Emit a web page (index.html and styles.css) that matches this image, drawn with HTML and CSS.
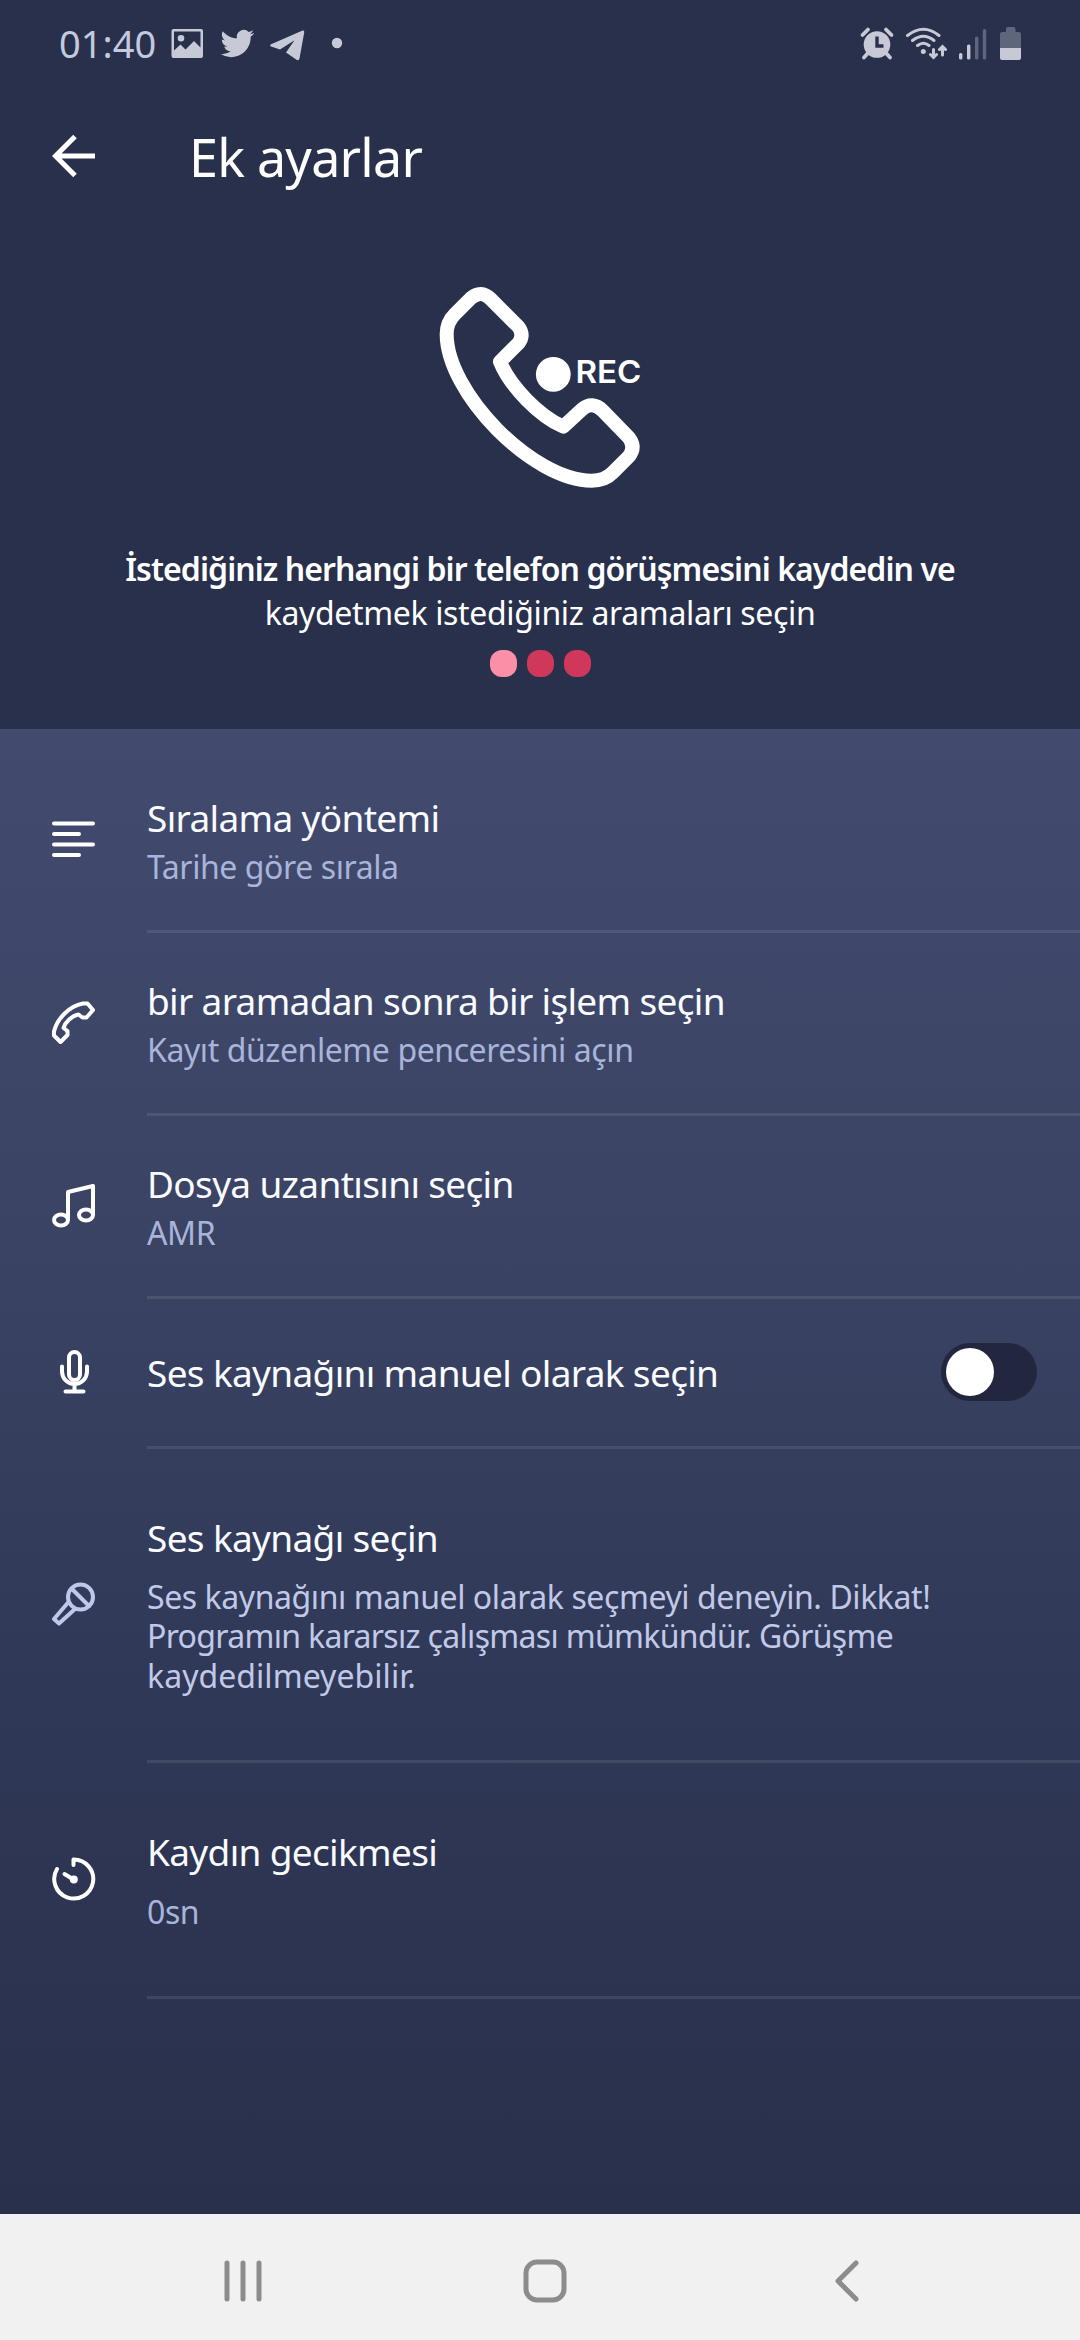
FILE: index.html
```html
<!DOCTYPE html>
<html lang="tr">
<head>
<meta charset="utf-8">
<title>Ek ayarlar</title>
<link rel="stylesheet" href="styles.css">
</head>
<body>
<div class="screen">
  <header class="status">
    <div class="status-left">
      <span class="clock">01:40</span>
      <svg class="status-notifications" width="180" height="40" viewBox="165 22 180 40" fill="currentColor">
        <path fill-rule="evenodd" d="M173.500 28h27.500a2 2 0 0 1 2 2v25a2 2 0 0 1-2 2h-27.500a2 2 0 0 1-2-2v-25a2 2 0 0 1 2-2zM174 30.500v19l6.500-6 5 5 8.500-8.500 6.500 6.500v-16zM181 34a3.300 3.300 0 1 1 0 6.600a3.300 3.300 0 1 1 0-6.600z"/>
        <path transform="translate(220.500 25.700) scale(1.4)" d="M23.953 4.570a10 10 0 0 1-2.825.775 4.958 4.958 0 0 0 2.163-2.723c-.951.555-2.005.959-3.127 1.184a4.920 4.920 0 0 0-8.384 4.482C7.690 8.095 4.067 6.130 1.640 3.162a4.822 4.822 0 0 0-.666 2.475c0 1.710.870 3.213 2.188 4.096a4.904 4.904 0 0 1-2.228-.616v.060a4.923 4.923 0 0 0 3.946 4.827 4.996 4.996 0 0 1-2.212.085 4.936 4.936 0 0 0 4.604 3.417 9.867 9.867 0 0 1-6.102 2.105c-.390 0-.779-.023-1.170-.067a13.995 13.995 0 0 0 7.557 2.209c9.053 0 13.998-7.496 13.998-13.985 0-.210 0-.420-.015-.630a9.935 9.935 0 0 0 2.460-2.548z"/>
        <path d="M270.500 43.500L302 29.800q2.600-1 2.200 1.600l-4.700 26.100q-.6 2.700-3 1.300L286 51.500l8.500-12.200-14.500 9.200-9-3q-1.600-.9-.5-2z"/>
        <circle cx="337" cy="42" r="5.200"/>
      </svg>
    </div>
    <svg width="166" height="40" viewBox="858 22 166 40" fill="currentColor">
      <circle cx="877" cy="43.500" r="13.300"/>
      <path d="M877 35.500v9.500h6.500" fill="none" stroke="#28304b" stroke-width="3.400"/>
      <path d="M862.500 34l5.500-5.500M891.500 34l-5.500-5.500M868 52l-4 4.500M886 52l4 4.500" fill="none" stroke="currentColor" stroke-width="3.800" stroke-linecap="round"/>
      <g fill="none" stroke="currentColor" stroke-width="3" stroke-linecap="round">
        <path d="M907.500 34.500q16-12.500 31.500 0M912.500 39.500q11-8.500 21.500 0M917.500 44.500q6-4.500 11.500 0M933.500 48.500v8M930.500 53.500l3 3 3-3M942.500 54v-8M939.500 48.500l3-3 3 3"/>
      </g>
      <circle cx="923.300" cy="50.500" r="2.500"/>
      <rect x="959" y="52" width="3.400" height="6.500" rx="1.500"/>
      <rect x="967" y="43.500" width="3.400" height="15" rx="1.500"/>
      <rect x="975" y="35.500" width="3.400" height="23" rx="1.500" opacity=".35"/>
      <rect x="982.800" y="28" width="3.400" height="30.500" rx="1.500" opacity=".35"/>
      <path opacity=".35" d="M1000 47v-14q0-2 2-2h4v-3q0-2 2-2h5.500q2 0 2 2v3h3.500q2 0 2 2v14z"/>
      <path d="M1000 47h21v10q0 2-2 2h-17q-2 0-2-2z"/>
    </svg>
  </header>

  <div class="appbar">
    <svg width="44" height="44" viewBox="0 0 44 44" fill="none" stroke="currentColor" stroke-width="5"><path d="M43 22H5M23 2.500L3.500 22L23 41.500"/></svg>
    <h1>Ek ayarlar</h1>
  </div>

  <section class="hero">
    <svg width="204" height="204" viewBox="438 285 204 204">
      <path transform="translate(400 260) scale(.33333)" fill="none" stroke="#fff" stroke-width="42" stroke-linejoin="round" d="M212 115L164 163Q140 187 140 222C140 400 400 662 575 662Q615 662 638 638L686 590Q709 561 686 532L608 452Q577 422 546 448L490 500C420 470 330 380 300 305L355 250Q374 226 355 200L272 117Q243 88 212 115Z"/>
      <circle cx="553.300" cy="374.300" r="17.400" fill="#fff"/>
      <text class="rec" x="575.500" y="382.700" textLength="66" lengthAdjust="spacingAndGlyphs">REC</text>
    </svg>
    <p class="hero-text"><strong>İstediğiniz herhangi bir telefon görüşmesini kaydedin ve</strong><br>kaydetmek istediğiniz aramaları seçin</p>
    <div class="dots"><i class="dot dot-active"></i><i class="dot"></i><i class="dot"></i></div>
  </section>

  <main class="panel">
    <div class="row">
      <svg class="icon" viewBox="0 0 44 44"><path d="M2 5.500h39M2 16h25M2 26.500h39M2 37h25"/></svg>
      <div class="body"><div><h2>Sıralama yöntemi</h2><p>Tarihe göre sırala</p></div></div>
    </div>
    <div class="row">
      <svg class="icon" viewBox="0 0 44 44"><path d="M8.500 41L2 34.500V30.500C5 18 17 5 31 2.500H35.500L41 9L34.500 16.500H30.500L26.500 13.500C20 14.500 13 21.500 11.500 27L15.500 30V34Z"/></svg>
      <div class="body"><div><h2>bir aramadan sonra bir işlem seçin</h2><p>Kayıt düzenleme penceresini açın</p></div></div>
    </div>
    <div class="row">
      <svg class="icon" viewBox="0 0 44 44"><path d="M16 34V8L41 2V30"/><ellipse cx="9" cy="36" rx="7" ry="5.500"/><ellipse cx="34" cy="31" rx="7" ry="5.500"/></svg>
      <div class="body"><div><h2>Dosya uzantısını seçin</h2><p>AMR</p></div></div>
    </div>
    <div class="row row-switch">
      <svg class="icon" viewBox="0 0 44 44"><rect x="17" y="2" width="11" height="28" rx="5.500"/><path d="M10 16.500v5a12.500 12.500 0 0 0 25 0v-5M22.500 34v7M13.500 41.500h18"/></svg>
      <div class="body"><h2>Ses kaynağını manuel olarak seçin</h2><span class="switch"></span></div>
    </div>
    <div class="row row-source">
      <svg class="icon icon-muted" viewBox="0 0 44 44"><circle cx="28.500" cy="15" r="12.500"/><path d="M20 7L37 24M16.500 20L2 37L7 41.500L23 27"/></svg>
      <div class="body"><div><h2>Ses kaynağı seçin</h2><p>Ses kaynağını manuel olarak seçmeyi deneyin. Dikkat!<br><span class="tight">Programın kararsız çalışması mümkündür. Görüşme</span><br><span class="loose">kaydedilmeyebilir.</span></p></div></div>
    </div>
    <div class="row row-delay">
      <svg class="icon" viewBox="0 0 44 44"><path d="M5 12A19.500 19.500 0 1 0 21.500 2.500V8"/><path d="M12.500 17L21.500 22.500"/><circle cx="21.800" cy="22.500" r="2"/></svg>
      <div class="body"><div><h2>Kaydın gecikmesi</h2><p>0sn</p></div></div>
    </div>
  </main>

  <nav class="navbar">
    <svg width="40" height="42" viewBox="0 0 40 42"><path d="M3 3v36M19 3v36M35 3v36"/></svg>
    <svg class="nav-home" width="44" height="44" viewBox="0 0 44 44"><rect x="3" y="3" width="38" height="38" rx="11"/></svg>
    <svg width="26" height="42" viewBox="0 0 26 42"><path d="M22 3L4 21L22 39"/></svg>
  </nav>
</div>
</body>
</html>
```
FILE: styles.css
```css
* { box-sizing: border-box; }
body { margin: 0; font-family: "Noto Sans", sans-serif; color: #fff; background: #28304b; }
h1, h2, p { margin: 0; font-weight: 400; }
svg { display: block; flex: none; }

.screen { width: 1080px; height: 2340px; display: flex; flex-direction: column; background: #28304b; }

.status { height: 86px; padding: 0 56px 0 59px; display: flex; justify-content: space-between; align-items: center; color: #c7cad6; }
.status-left { display: flex; align-items: center; }
.clock { width: 106px; font-size: 38px; line-height: 46px; color: #c3c9df; }

.appbar { height: 140px; padding-left: 52px; display: flex; align-items: center; gap: 93px; }
.appbar h1 { font-size: 52px; line-height: 64px; letter-spacing: -0.75px; padding-top: 2px; }

.hero { height: 503px; padding-top: 59px; display: flex; flex-direction: column; align-items: center; }
.rec { font: 600 31px "Inter", sans-serif; fill: #fff; }
.hero-text { margin-top: 57.5px; text-align: center; font-size: 32px; line-height: 44px; letter-spacing: -0.35px; white-space: nowrap; }
.hero-text strong { font-weight: 600; letter-spacing: -0.93px; }
.dots { margin-top: 15px; display: flex; gap: 10px; }
.dot { width: 27px; height: 27px; border-radius: 12px; background: #cf375b; }
.dot-active { background: #fb8fa7; }

.panel { flex: 1; padding-top: 21px; background: linear-gradient(#424b6e, #3a4363 35%, #303857 65%, #28304b); }
.row { height: 183px; padding-left: 52px; display: flex; align-items: stretch; gap: 51px; }
.row-switch { height: 150px; }
.row-source { height: 314px; }
.row-delay { height: 236px; }
.icon { width: 44px; height: 44px; align-self: center; margin-bottom: 4px; fill: none; stroke: #fff; stroke-width: 4; stroke-linecap: round; stroke-linejoin: round; }
.icon-muted { stroke: #bfc8e8; }
.body { flex: 1; display: flex; align-items: center; justify-content: space-between; padding-right: 43px; border-bottom: 3px solid rgba(255, 255, 255, 0.09); }
.body h2 { font-size: 37px; line-height: 48px; letter-spacing: -0.66px; white-space: nowrap; color: #fafbff; }
.body p { margin-top: 4px; font-size: 32px; line-height: 41px; letter-spacing: -0.42px; white-space: nowrap; color: #a9b4da; }
.row-source p, .row-delay p { margin-top: 15px; }
.row-source p { line-height: 39.3px; color: #c1c9e8; }
.tight { letter-spacing: -0.68px; }
.loose { letter-spacing: 0.05px; }
.switch { width: 96px; height: 58px; border-radius: 29px; background: #22273f; padding: 5px; margin-bottom: 2px; }
.switch::before { content: ""; display: block; width: 48px; height: 48px; border-radius: 50%; background: #fff; }

.navbar { height: 126px; padding: 7px 0 0 224px; display: flex; align-items: center; background: #f1f1f1; }
.navbar svg { fill: none; stroke: #8c8c8c; stroke-width: 5; stroke-linecap: round; stroke-linejoin: round; }
.navbar .nav-home { margin: 0 267px 0 259px; }
```
